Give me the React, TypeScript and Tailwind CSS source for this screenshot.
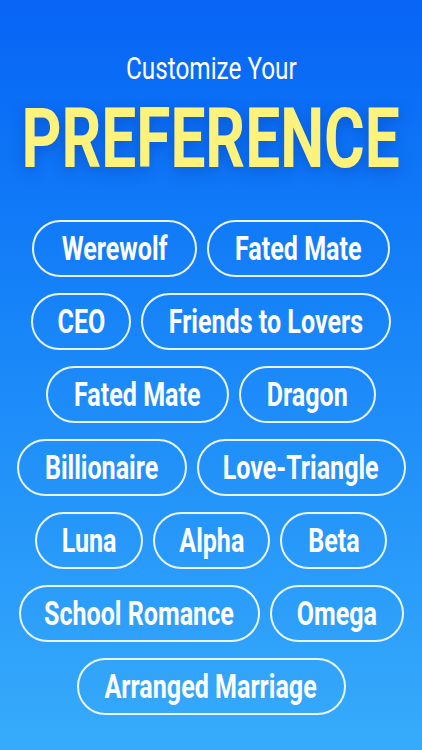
import React from 'react';

// tag label + pill width (px) as laid out in the design
const rows: [string, number][][] = [
  [['Werewolf', 165], ['Fated Mate', 183]],
  [['CEO', 100], ['Friends to Lovers', 250]],
  [['Fated Mate', 183], ['Dragon', 137]],
  [['Billionaire', 170], ['Love-Triangle', 209]],
  [['Luna', 108], ['Alpha', 117], ['Beta', 107]],
  [['School Romance', 241], ['Omega', 134]],
  [['Arranged Marriage', 269]],
];

export default function App() {
  return (
    <div className="w-[422px] h-[750px] overflow-hidden bg-gradient-to-b from-[#0864f5] to-[#37abfb] flex flex-col items-center font-['Roboto',sans-serif]">
      <h2 className="mt-[48px] text-white text-[32px] leading-[40px] whitespace-nowrap scale-x-[0.76]">
        Customize Your
      </h2>
      <h1 className="mt-[6px] text-[#fdf27c] text-[84px] leading-[90px] font-bold whitespace-nowrap scale-x-[0.74] [text-shadow:0_4px_16px_rgba(0,40,150,0.35)]">
        PREFERENCE
      </h1>
      <div className="mt-[36px] flex flex-col items-center gap-4">
        {rows.map((row, i) => (
          <div key={i} className="flex gap-[10px]">
            {row.map(([tag, w]) => (
              <div
                key={tag}
                style={{ width: w }}
                className="h-[57px] flex items-center justify-center rounded-full border-2 border-white/90"
              >
                <span className="text-white text-[33px] font-bold whitespace-nowrap scale-x-[0.76]">
                  {tag}
                </span>
              </div>
            ))}
          </div>
        ))}
      </div>
    </div>
  );
}
